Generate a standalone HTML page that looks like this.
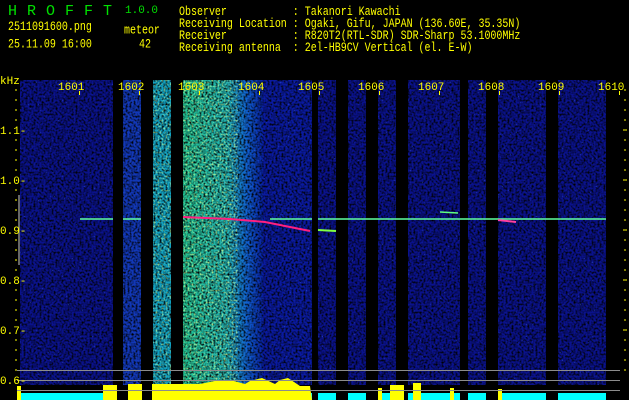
<!DOCTYPE html>
<html><head><meta charset="utf-8"><style>
html,body{margin:0;padding:0;background:#000;width:629px;height:400px;overflow:hidden}
svg{display:block}
text{font-family:"Liberation Mono","DejaVu Sans Mono",monospace;white-space:pre}
</style></head><body>
<svg width="629" height="400" viewBox="0 0 629 400" xmlns="http://www.w3.org/2000/svg" xml:space="preserve">
<defs>
<filter id="nz" x="0" y="0" width="100%" height="100%">
<feTurbulence type="fractalNoise" baseFrequency="0.5" numOctaves="1" seed="3"/>
<feColorMatrix type="matrix" values="0 0 0 0 0  0 0 0 0 0  0 0 0 0 0  -2.6 0 0 0 1.55"/>
</filter>
<filter id="nz2" x="0" y="0" width="100%" height="100%">
<feTurbulence type="fractalNoise" baseFrequency="0.5" numOctaves="1" seed="9"/>
<feColorMatrix type="matrix" values="0 0 0 0 0.1  0 0 0 0 0.3  0 0 0 0 1  0 -5 0 0 1.6"/>
</filter>
<filter id="nz3" x="0" y="0" width="100%" height="100%">
<feTurbulence type="fractalNoise" baseFrequency="0.5" numOctaves="1" seed="5"/>
<feColorMatrix type="matrix" values="0 0 0 0 0.6  0 0 0 0 1  0 0 0 0 0.3  0 0 -4 0 1.9"/>
</filter>
<linearGradient id="band" x1="0" x2="1" y1="0" y2="0">
<stop offset="0" stop-color="#20c090"/><stop offset="0.55" stop-color="#20b0b0"/><stop offset="0.8" stop-color="#1060d0"/><stop offset="1" stop-color="#0820a0"/>
</linearGradient>
</defs>
<rect x="20" y="80" width="600" height="305" fill="#0a128c"/>
<rect x="123" y="80" width="18" height="305" fill="#1238b8"/>
<rect x="153" y="80" width="18" height="305" fill="#10a0c0"/>
<rect x="183" y="80" width="80" height="305" fill="url(#band)"/>
<rect x="263" y="80" width="50" height="305" fill="#0a1aa0"/>
<rect x="20" y="80" width="600" height="305" filter="url(#nz)"/>
<rect x="153" y="80" width="18" height="305" filter="url(#nz3)" opacity="0.6"/>
<rect x="183" y="80" width="55" height="305" filter="url(#nz3)" opacity="0.75"/>
<rect x="20" y="80" width="600" height="305" filter="url(#nz2)" opacity="0.4"/>
<g fill="#000">
<rect x="113" y="80" width="10" height="320"/>
<rect x="141" y="80" width="12" height="320"/>
<rect x="171" y="80" width="12" height="320"/>
<rect x="312" y="80" width="6" height="320"/>
<rect x="336" y="80" width="12" height="320"/>
<rect x="366" y="80" width="12" height="320"/>
<rect x="396" y="80" width="12" height="320"/>
<rect x="460" y="80" width="8" height="320"/>
<rect x="486" y="80" width="12" height="320"/>
<rect x="546" y="80" width="12" height="320"/>
<rect x="606" y="80" width="14" height="320"/>
</g>
<g stroke-width="1.5" fill="none">
<line x1="80" y1="219" x2="113" y2="219" stroke="#60ffa0"/>
<line x1="123" y1="219" x2="141" y2="219" stroke="#60ffa0"/>
<polyline points="183,217 230,219 265,222 285,226 310,231" stroke="#ff2080" stroke-width="2"/>
<line x1="270" y1="219" x2="312" y2="219" stroke="#60ffa0"/>
<line x1="318" y1="219" x2="606" y2="219" stroke="#60ffa0"/>
<line x1="318" y1="230" x2="336" y2="231" stroke="#80ff40" stroke-width="2"/>
<line x1="498" y1="220" x2="516" y2="222" stroke="#ff40a0" stroke-width="2"/>
<line x1="440" y1="212" x2="458" y2="213" stroke="#60ff80"/>
<line x1="19" y1="195" x2="19" y2="265" stroke="#888"/>
</g>
<g fill="#00ffff">
<rect x="20" y="393" width="93" height="7"/>
<rect x="250" y="393" width="356" height="7"/>
</g>
<g fill="#000">
<rect x="312" y="392" width="6" height="8"/><rect x="336" y="392" width="12" height="8"/><rect x="366" y="392" width="12" height="8"/><rect x="396" y="392" width="12" height="8"/><rect x="460" y="392" width="8" height="8"/><rect x="486" y="392" width="12" height="8"/><rect x="546" y="392" width="12" height="8"/>
</g>
<g fill="#ffff00">
<rect x="17" y="386" width="4" height="14"/>
<rect x="103" y="385" width="14" height="15"/>
<rect x="128" y="384" width="14" height="16"/>
<polygon points="152,400 152,384 200,384 215,381 230,380 245,384 250,381 262,378 275,384 280,380 288,378 300,386 310,386 312,400"/>
<rect x="247" y="386" width="10" height="14"/>
<rect x="265" y="387" width="12" height="13"/>
<rect x="378" y="388" width="4" height="12"/>
<rect x="390" y="385" width="14" height="15"/>
<rect x="413" y="383" width="8" height="17"/>
<rect x="450" y="388" width="4" height="12"/>
<rect x="498" y="389" width="4" height="11"/>
</g>
<g stroke="#8c8c8c" stroke-width="1">
<line x1="17" y1="370.5" x2="620" y2="370.5"/>
<line x1="17" y1="380.5" x2="620" y2="380.5"/>
<line x1="17" y1="390.5" x2="620" y2="390.5"/>
</g>
<g fill="#ffff00" font-size="11">
<text x="0" y="84">kHz</text>
<text x="0" y="134">1.1-</text>
<text x="0" y="184">1.0-</text>
<text x="0" y="234">0.9-</text>
<text x="0" y="284">0.8-</text>
<text x="0" y="334">0.7-</text>
<text x="0" y="384">0.6-</text>
<text x="58" y="90">1601</text>
<text x="118" y="90">1602</text>
<text x="178" y="90">1603</text>
<text x="238" y="90">1604</text>
<text x="298" y="90">1605</text>
<text x="358" y="90">1606</text>
<text x="418" y="90">1607</text>
<text x="478" y="90">1608</text>
<text x="538" y="90">1609</text>
<text x="598" y="90">1610</text>
</g>
<g stroke="#ffff00" stroke-width="1">
<path d="M15 90h2M15 100h2M15 110h2M15 120h2M15 140h2M15 150h2M15 160h2M15 170h2M15 190h2M15 200h2M15 210h2M15 220h2M15 240h2M15 250h2M15 260h2M15 270h2M15 290h2M15 300h2M15 310h2M15 320h2M15 340h2M15 350h2M15 360h2M15 370h2"/>
<path d="M624 90h2M624 100h2M624 110h2M624 120h2M623 130h4M624 140h2M624 150h2M624 160h2M624 170h2M623 180h4M624 190h2M624 200h2M624 210h2M624 220h2M623 230h4M624 240h2M624 250h2M624 260h2M624 270h2M623 280h4M624 290h2M624 300h2M624 310h2M624 320h2M623 330h4M624 340h2M624 350h2M624 360h2M624 370h2"/>
<path d="M79.5 91v4M139.5 91v4M199.5 91v4M259.5 91v4M319.5 91v4M379.5 91v4M439.5 91v4M499.5 91v4M559.5 91v4M619.5 91v4"/>
</g>
<text x="8" y="15" fill="#00e000" font-size="15" letter-spacing="10">HROFFT</text>
<text x="125" y="13" fill="#00e000" font-size="11">1.0.0</text>
<g fill="#ffff00" font-size="10" transform="scale(1,1.25)">
<text x="8" y="24">2511091600.png</text>
<text x="124" y="27">meteor</text>
<text x="8" y="38">25.11.09 16:00</text>
<text x="139" y="38">42</text>
<text x="179" y="12">Observer           : Takanori Kawachi</text>
<text x="179" y="21.6">Receiving Location : Ogaki, Gifu, JAPAN (136.60E, 35.35N)</text>
<text x="179" y="31.2">Receiver           : R820T2(RTL-SDR) SDR-Sharp 53.1000MHz</text>
<text x="179" y="40.8">Receiving antenna  : 2el-HB9CV Vertical (el. E-W)</text>
</g>
</svg>
</body></html>
